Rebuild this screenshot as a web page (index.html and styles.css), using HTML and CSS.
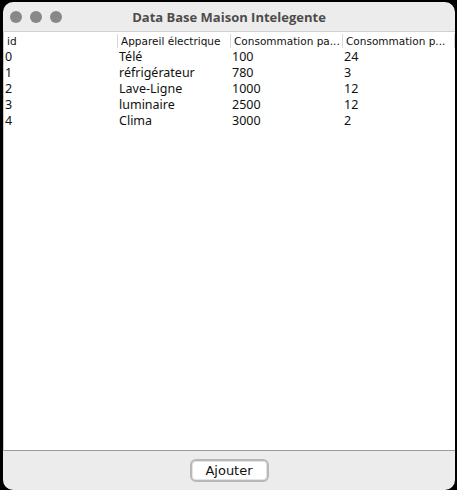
FILE: index.html
```html
<!DOCTYPE html>
<html lang="fr">
<head>
<meta charset="utf-8">
<link rel="stylesheet" href="styles.css">
</head>
<body>
<div class="window">
  <div class="titlebar">
    <div class="lights"><span class="light"></span><span class="light"></span><span class="light"></span></div>
    <div class="title">Data Base Maison Intelegente</div>
  </div>
  <div class="tablearea">
    <div class="thead">
      <div class="th">id</div>
      <div class="th">Appareil électrique</div>
      <div class="th">Consommation pa...</div>
      <div class="th">Consommation p...</div>
    </div>
    <div class="row"><div class="td">0</div><div class="td">Télé</div><div class="td">100</div><div class="td">24</div></div>
    <div class="row"><div class="td">1</div><div class="td">réfrigérateur</div><div class="td">780</div><div class="td">3</div></div>
    <div class="row"><div class="td">2</div><div class="td">Lave-Ligne</div><div class="td">1000</div><div class="td">12</div></div>
    <div class="row"><div class="td">3</div><div class="td">luminaire</div><div class="td">2500</div><div class="td">12</div></div>
    <div class="row"><div class="td">4</div><div class="td">Clima</div><div class="td">3000</div><div class="td">2</div></div>
  </div>
  <div class="footer">
    <button class="btn">Ajouter</button>
  </div>
</div>
</body>
</html>
```
FILE: styles.css
```css
html, body {
  margin: 0;
  padding: 0;
  background: #000;
  height: 490px;
  overflow: hidden;
}
body {
  font-family: "DejaVu Sans", sans-serif;
}
.window {
  margin: 2px 2px 0 3px;
  height: 488px;
  background: #ececec;
  border-radius: 10px;
  overflow: hidden;
  display: flex;
  flex-direction: column;
}
.titlebar {
  height: 29px;
  flex: none;
  position: relative;
  display: flex;
  align-items: center;
  justify-content: center;
  border-bottom: 1px solid #d0d0d0;
}
.lights {
  position: absolute;
  left: 7px;
  top: 9px;
  display: flex;
  gap: 8px;
}
.light {
  width: 12px;
  height: 12px;
  border-radius: 50%;
  background: #888;
}
.title {
  font-family: "Open Sans", sans-serif;
  font-weight: 700;
  font-size: 13px;
  color: #4c4c4c;
}
.tablearea {
  flex: 1;
  background: #fff;
  border-bottom: 1px solid #9a9a9a;
  border-left: 1px solid #c8c8c8;
}
.thead, .row {
  display: grid;
  grid-template-columns: 114px 113px 112px 112px;
}
.thead {
  height: 17px;
  align-items: center;
}
.th {
  font-size: 10.5px;
  color: #111;
  padding-left: 3px;
  border-right: 1px solid #d8d8d8;
  line-height: 14px;
}
.row { height: 16px; align-items: center; }
.td {
  font-family: "Noto Sans", sans-serif;
  font-size: 12.5px;
  color: #111;
  padding-left: 1px;
  line-height: 16px;
}
.footer {
  height: 39px;
  flex: none;
  display: flex;
  justify-content: center;
  align-items: center;
}
.btn {
  font-family: "DejaVu Sans", sans-serif;
  font-size: 13px;
  color: #111;
  width: 79px;
  height: 23px;
  background: #fff;
  border: 2px solid #b8b8b8;
  border-radius: 6px;
  padding: 0;
  box-shadow: inset 0 0 0 1px #e4e4e4;
}
```
